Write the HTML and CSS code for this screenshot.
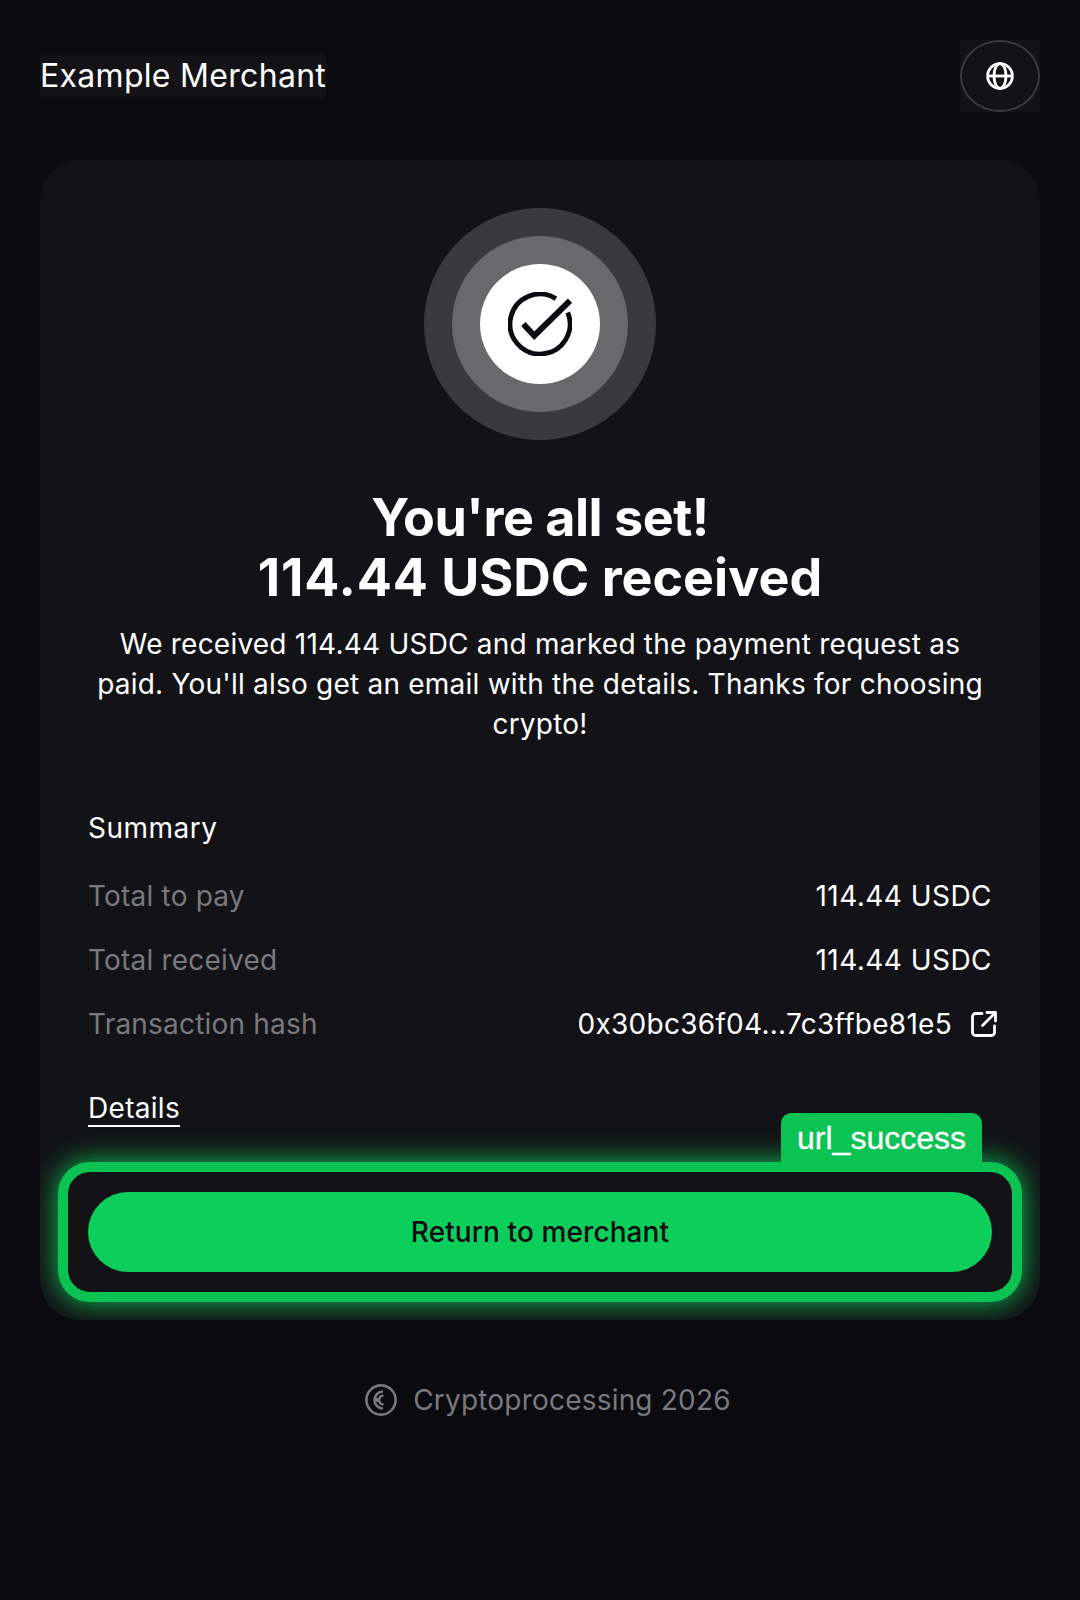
FILE: index.html
```html
<!DOCTYPE html>
<html lang="en">
<head>
<meta charset="utf-8">
<title>Payment received</title>
<link rel="stylesheet" href="styles.css">
</head>
<body>
<div class="page">
  <header class="header">
    <div class="merchant">Example Merchant</div>
    <div class="lang">
      <button class="lang-btn" aria-label="Language">
        <svg width="28" height="28" viewBox="0 0 28 28" fill="none" stroke="#fff" stroke-width="2.8"><circle cx="14" cy="14" r="12.4"/><ellipse cx="14" cy="14" rx="6" ry="12.4"/><path d="M1.600 14h24.8"/></svg>
      </button>
    </div>
  </header>
  <main class="card">
    <div class="rings"><div class="ring-mid"><div class="ring-in">
      <svg width="64" height="64" viewBox="0 0 64 64" fill="none" stroke="#0a0a0f" stroke-width="4.800"><path d="M59.700 20.500A30 30 0 1 1 47.900 6.600"/><path d="M15.300 32 26.300 43.700 62 8.700" stroke-width="6"/></svg>
    </div></div></div>
    <h1 class="title"><span class="title-first">You're all set!</span><br><span class="title-num">114.44</span> USDC received</h1>
    <p class="lead">We received 114.44 USDC and marked the payment request as paid. You'll also get an email with the details. Thanks for choosing crypto!</p>
    <section class="summary">
      <h2 class="summary-title">Summary</h2>
      <div class="row"><span class="label">Total to pay</span><span class="value">114.44 USDC</span></div>
      <div class="row"><span class="label">Total received</span><span class="value">114.44 USDC</span></div>
      <div class="row"><span class="label">Transaction hash</span><span class="hash">0x30bc36f04...7c3ffbe81e5
        <svg class="ext" width="28" height="28" viewBox="0 0 28 28" fill="none" stroke="#fff" stroke-width="2.8" stroke-linecap="round" stroke-linejoin="round"><path d="M12 3.500H5.500a3 3 0 0 0-3 3v16a3 3 0 0 0 3 3h16a3 3 0 0 0 3-3V16"/><path d="M12.500 15.500 25 3M17 2.500h8.500V11"/></svg>
      </span></div>
    </section>
    <a class="details">Details</a>
    <div class="highlight">
      <span class="tag">url_success</span>
      <button class="cta">Return to merchant</button>
    </div>
  </main>
  <footer class="footer">
    <svg width="32" height="32" viewBox="0 0 32 32" fill="none" stroke="#77777c" stroke-width="2.600"><circle cx="16" cy="16" r="14.600"/><path d="M18 7.500A8.500 8.500 0 0 0 18 24.500"/><path d="M18.500 11.500A5 5 0 0 0 14 16 5 5 0 0 0 18.500 20.500"/><path d="M9.500 16h4.500" stroke-width="4"/></svg>
    <span>Cryptoprocessing 2026</span>
  </footer>
</div>
</body>
</html>
```
FILE: styles.css
```css
* { box-sizing: border-box; }
html, body { margin: 0; padding: 0; }
body { background: #0a0a0f; color: #fff; font-family: Inter, "Liberation Sans", sans-serif; width: 1080px; height: 1600px; overflow: hidden; }
.page { padding: 40px 40px 0; display: flex; flex-direction: column; }
.header { display: flex; justify-content: space-between; align-items: flex-start; height: 120px; }
.merchant { margin-top: 14px; height: 44px; background: #131317; font-size: 32px; line-height: 44px; letter-spacing: .3px; }
.lang { width: 80px; height: 72px; background: #131317; }
.lang-btn { width: 80px; height: 72px; border-radius: 50%; border: 2px solid #3a3a3e; background: transparent; padding: 0; display: flex; align-items: center; justify-content: center; }
.card { background: #131317; border-radius: 40px; height: 1160px; overflow: hidden; padding: 48px 48px 0; display: flex; flex-direction: column; }
.rings { width: 232px; height: 232px; border-radius: 50%; background: #3a3a3c; align-self: center; display: flex; align-items: center; justify-content: center; flex: none; }
.ring-mid { width: 176px; height: 176px; border-radius: 50%; background: #69696b; display: flex; align-items: center; justify-content: center; }
.ring-in { width: 120px; height: 120px; border-radius: 50%; background: #fff; display: flex; align-items: center; justify-content: center; }
.title { margin: 48px 0 0; font-size: 52px; line-height: 60px; font-weight: 700; text-align: center; }
.title-first { letter-spacing: -.48px; }
.title-num { letter-spacing: .85px; }
.lead { margin: 16px 0 0; font-size: 28px; line-height: 40px; text-align: center; letter-spacing: .22px; }
.summary { margin-top: 64px; display: flex; flex-direction: column; gap: 24px; }
.summary-title { margin: 0 0 4px; font-size: 28px; line-height: 40px; font-weight: 400; letter-spacing: .5px; }
.row { display: flex; justify-content: space-between; align-items: center; height: 40px; font-size: 28px; letter-spacing: .2px; }
.label { color: #79797e; }
.value { letter-spacing: .46px; }
.hash { display: flex; align-items: center; gap: 18px; margin-right: -6px; letter-spacing: .28px; }
.details { margin-top: 47px; align-self: flex-start; font-size: 28px; line-height: 34px; letter-spacing: .3px; border-bottom: 2px solid #fff; }
.highlight { position: relative; flex: none; margin: 35px -30px 0; height: 140px; border: 10px solid #0bc353; border-radius: 32px; padding: 20px; box-shadow: 0 0 28px #0bc353; background: #131317; }
.tag { position: absolute; top: -59px; right: 30px; width: 201px; height: 50px; background: #0bc353; border-radius: 10px 10px 0 0; font-family: "Liberation Sans", Arial, sans-serif; font-size: 32px; line-height: 50px; text-align: center; color: #fff; -webkit-text-stroke: .3px #fff; }
.cta { display: block; width: 100%; height: 80px; border: 0; border-radius: 40px; background: #0bce5b; color: #0a0a0f; font-family: inherit; font-size: 28px; font-weight: 500; letter-spacing: .1px; }
.footer { margin-top: 60px; padding-left: 16px; display: flex; justify-content: center; align-items: center; gap: 16px; font-size: 28px; line-height: 40px; letter-spacing: .2px; color: #79797e; }
```
